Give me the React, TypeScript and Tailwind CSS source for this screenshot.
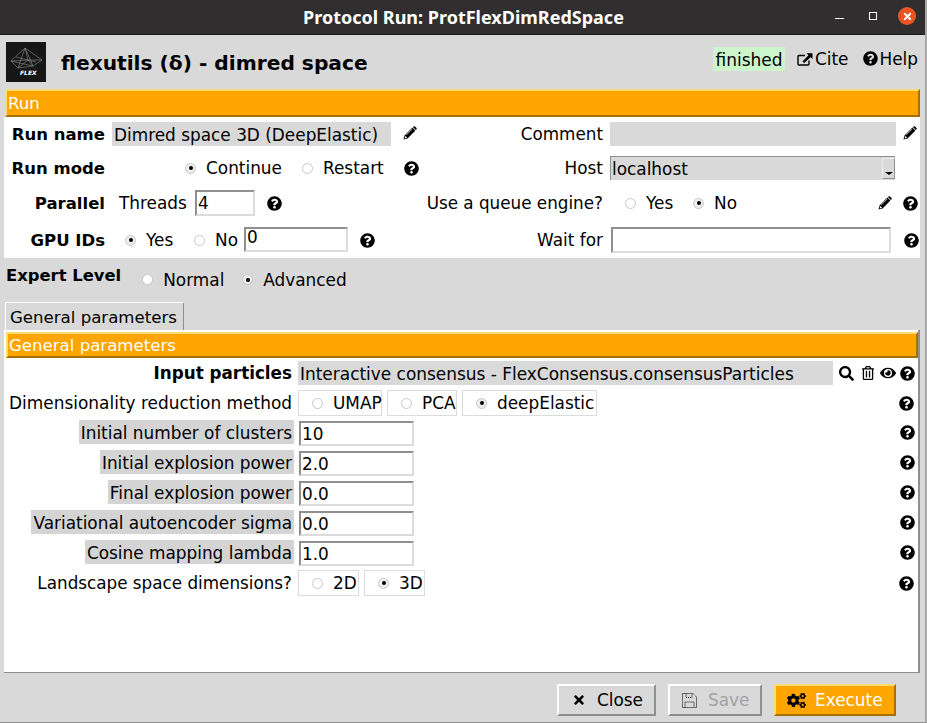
import React from 'react';
import {
  FaCogs,
  FaEye,
  FaQuestionCircle,
  FaRegTrashAlt,
  FaSearch,
  FaTimes,
} from 'react-icons/fa';

// ============================================
// Small widgets
// ============================================

const Help: React.FC<{ className?: string }> = ({ className = '' }) => (
  <FaQuestionCircle className={`text-[15px] text-black shrink-0 ${className}`} />
);

const Pencil: React.FC<{ className?: string }> = ({ className = '' }) => (
  <svg width="14" height="14" viewBox="0 0 14 14" className={`shrink-0 ${className}`}>
    <path d="M.5 13.5 1.6 9.4 9.4 1.6 12.4 4.6 4.6 12.4Z" fill="#000" />
    <path d="M10.2.8C10.9.1 11.6.1 12.2.7L13.3 1.8C13.9 2.4 13.9 3.1 13.2 3.8L12.9 4.1 9.9 1.1Z" fill="#000" />
    <path d="M2.3 9.9 1.6 12.4 4.1 11.7Z" fill="#fff" />
    <path d="M3.4 8.8 9.3 2.9" stroke="#fff" strokeWidth="0.7" />
  </svg>
);

const Radio: React.FC<{ checked?: boolean; label: string; className?: string }> = ({
  checked,
  label,
  className = '',
}) => (
  <span className={`flex items-center shrink-0 whitespace-nowrap ${className}`}>
    <span
      className={`w-[11px] h-[11px] rounded-full border border-[#c8c8c8] flex items-center justify-center shrink-0 ${
        checked ? 'bg-[#eeeeee]' : 'bg-white'
      }`}
    >
      {checked && <span className="w-[4px] h-[4px] rounded-full bg-black" />}
    </span>
    <span className="ml-[10px] pt-[2px]">{label}</span>
  </span>
);

const TextBox: React.FC<{ value?: string; className?: string; valueClass?: string }> = ({
  value = '',
  className = '',
  valueClass = 'pt-[2px]',
}) => (
  <div
    className={`bg-white border-2 border-t-[#8f8f8f] border-l-[#8f8f8f] border-r-[#dcdcdc] border-b-[#dcdcdc] pl-[1px] flex items-center shrink-0 ${className}`}
  >
    <span className={valueClass}>{value}</span>
  </div>
);

const SectionBar: React.FC<{ title: string; className?: string }> = ({ title, className = '' }) => (
  <div
    className={`bg-[#ffa500] text-white text-[16.6px] border-2 border-t-[#ffdb73] border-l-[#ffdb73] border-r-[#a67000] border-b-[#a67000] flex items-center ${className}`}
  >
    <span className="pt-[2px]">{title}</span>
  </div>
);

const CiteIcon = () => (
  <svg width="16" height="14" viewBox="0 0 16 14" className="shrink-0">
    <path d="M12 8.5V12a1 1 0 0 1-1 1H2a1 1 0 0 1-1-1V4.5a1 1 0 0 1 1-1h6" fill="none" stroke="#000" strokeWidth="1.4" />
    <path d="M5.5 9.5 11.5 3.2 9.5 1.2H15.5V7L13.5 5.2 7.2 11Z" fill="#000" />
  </svg>
);

const SaveIcon = () => (
  <svg width="15" height="15" viewBox="0 0 15 15" className="shrink-0">
    <path
      d="M.5.5H11L14.5 4V14.5H.5ZM4 .5V4.5H10V.5M3 14.5V9H12V14.5"
      fill="none"
      stroke="#000"
      strokeWidth="1"
      strokeDasharray="1 1"
    />
  </svg>
);

const FlexLogo = () => (
  <div className="w-10 h-10 bg-[#161616] shrink-0 relative overflow-hidden">
    <svg width="40" height="40" viewBox="0 0 40 40" className="absolute inset-0">
      <g fill="none" stroke="#8a8a8a" strokeWidth="0.6">
        <path d="M19 6 5 19 12 26 27 24 36 18Z" />
        <path d="M19 6 12 26M19 6 27 24M19 6 22 18M5 19 22 18 36 18M5 19 27 24M12 26 22 18 27 24M10 15 30 20" />
      </g>
    </svg>
    <span className="absolute left-[14px] top-[28px] text-[6px] leading-[6px] font-bold italic text-white">FLEX</span>
  </div>
);

// ============================================
// Form rows
// ============================================

const ParamRow: React.FC<{ label: string; value: string }> = ({ label, value }) => (
  <div className="flex items-start h-[30px]">
    <div className="w-[292px] flex justify-end shrink-0">
      <span className="bg-[#d4d4d4] h-6 leading-[26px] pl-[2px] pr-[2px] whitespace-nowrap">{label}</span>
    </div>
    <TextBox value={value} className="w-[115px] h-[25px] ml-[5px] mt-[1px]" />
    <Help className="ml-[486px] mt-[5px]" />
  </div>
);

const RadioBox: React.FC<{ checked?: boolean; label: string; className?: string }> = ({
  checked,
  label,
  className = '',
}) => (
  <div className={`h-[26px] border border-[#dcdcdc] flex items-center pl-[13px] shrink-0 ${className}`}>
    <Radio checked={checked} label={label} />
  </div>
);

// ============================================
// App
// ============================================

export default function App() {
  return (
    <div
      className="w-[927px] h-[723px] bg-[#d9d9d9] text-[#000] text-[16.9px] overflow-hidden flex flex-col border-r-2 border-b border-r-[#a8a8a8] border-b-[#8f8f8f]"
      style={{ fontFamily: '"DejaVu Sans", sans-serif' }}
    >
      {/* Title bar */}
      <div className="h-[35px] shrink-0 bg-[#302e2e] border-b border-[#1f1e1e] flex items-center relative">
        <div
          className="w-full text-center text-white font-bold text-[18px] pl-[2px]"
          style={{ fontFamily: '"Noto Sans", sans-serif' }}
        >
          Protocol Run: ProtFlexDimRedSpace
        </div>
        <span className="absolute left-[835px] top-[18px] w-[9px] h-[1px] bg-white" />
        <span className="absolute left-[869px] top-[12px] w-[8px] h-[8px] border border-white" />
        <span className="absolute left-[898px] top-[7px] w-[18px] h-[18px] rounded-full bg-[#e95420] flex items-center justify-center">
          <FaTimes className="text-white text-[11px]" />
        </span>
      </div>

      {/* Header */}
      <div className="h-[54px] shrink-0 flex items-center pl-[6px]">
        <FlexLogo />
        <div className="ml-[15px] pt-[2px] font-bold text-[20.2px] leading-none whitespace-nowrap">flexutils (δ) - dimred space</div>
        <div className="ml-auto flex items-center mb-[6px] mr-[7px]">
          <span className="bg-[#ccf5cc] h-6 leading-[26px] w-[72px] text-center text-[17px]">finished</span>
          <span className="ml-3 flex items-center">
            <CiteIcon />
            <span className="ml-[2px] pt-[2px]">Cite</span>
          </span>
          <span className="ml-[15px] flex items-center">
            <Help className="mr-[1px]" />
            <span className="pt-[2px]">Help</span>
          </span>
        </div>
      </div>

      {/* Run section */}
      <div className="ml-[5px] mr-[5px] shrink-0">
        <SectionBar title="Run" className="h-[28px] pl-[1px]" />
      </div>
      <div className="ml-[4px] mr-[5px] bg-white h-[141px] pt-[5px] shrink-0">
        <div className="flex items-center h-6">
          <div className="w-[101px] pt-[2px] text-right font-bold text-[16.5px] shrink-0 whitespace-nowrap">Run name</div>
          <div className="ml-[7px] w-[279px] h-6 leading-[26px] pl-[2px] bg-[#d9d9d9] shrink-0 whitespace-nowrap">Dimred space 3D (DeepElastic)</div>
          <Pencil className="ml-[12px] -mt-[2px]" />
          <div className="ml-[87px] w-[99px] pt-[2px] text-right text-[16.8px] shrink-0">Comment</div>
          <div className="ml-[7px] w-[286px] h-6 bg-[#d9d9d9] shrink-0" />
          <Pencil className="ml-[7px] -mt-[2px]" />
        </div>
        <div className="flex items-center h-6 mt-[10px]">
          <div className="w-[101px] pt-[2px] text-right font-bold text-[16.5px] shrink-0 whitespace-nowrap">Run mode</div>
          <Radio checked label="Continue" className="ml-[80px] w-[98px]" />
          <Radio label="Restart" className="ml-[19px] w-[83px]" />
          <Help className="ml-[19px]" />
          <div className="ml-[134px] w-[50px] pt-[2px] text-right shrink-0">Host</div>
          <div className="ml-[7px] w-[285px] h-[24px] bg-[#d9d9d9] border-t border-l border-t-[#8f8f8f] border-l-[#8f8f8f] leading-[24px] pl-[1px] relative shrink-0">
            localhost
            <span className="absolute right-[0px] top-[1px] w-[13px] h-[21px] bg-[#d9d9d9] border border-[#8f8f8f] border-t-[#eeeeee] border-l-[#eeeeee]">
              <span className="absolute left-[2px] bottom-[3px] w-0 h-0 border-l-[4px] border-r-[4px] border-t-[3px] border-l-transparent border-r-transparent border-t-black" />
            </span>
          </div>
        </div>
        <div className="flex items-center h-[26px] mt-[10px]">
          <div className="w-[101px] pt-[2px] text-right font-bold text-[16.5px] shrink-0">Parallel</div>
          <span className="ml-[14px] w-[68px] pt-[2px] shrink-0 whitespace-nowrap">Threads</span>
          <TextBox value="4" className="ml-[8px] w-[60px] h-[26px]" />
          <Help className="ml-[12px]" />
          <div className="ml-[145px] w-[176px] pt-[2px] text-[16.8px] whitespace-nowrap shrink-0 flex justify-end">Use a queue engine?</div>
          <Radio label="Yes" className="ml-[22px] w-[49px]" />
          <Radio checked label="No" className="ml-[19px] w-[42px]" />
          <Pencil className="ml-[143px]" />
          <Help className="ml-[11px]" />
        </div>
        <div className="flex items-center h-[26px] mt-[11px]">
          <div className="w-[101px] pt-[2px] text-right font-bold text-[16.5px] shrink-0 whitespace-nowrap">GPU IDs</div>
          <Radio checked label="Yes" className="ml-[20px] w-[48px]" />
          <Radio label="No" className="ml-[21px] w-[42px]" />
          <TextBox value="0" valueClass="mb-[4px]" className="ml-[8px] w-[104px] h-[25px] -mt-[1px]" />
          <Help className="ml-[12px]" />
          <div className="ml-[158px] w-[70px] pt-[2px] shrink-0 whitespace-nowrap flex justify-end">Wait for</div>
          <TextBox className="ml-[8px] w-[280px] h-[26px]" />
          <Help className="ml-[13px]" />
        </div>
      </div>

      {/* Expert level */}
      <div className="h-[44px] shrink-0 flex items-start pl-[6px]">
        <span className="font-bold text-[16.4px] mt-[6px] whitespace-nowrap">Expert Level</span>
        <Radio label="Normal" className="ml-[21px] mt-[8px] w-[80px]" />
        <Radio checked label="Advanced" className="ml-[20px] mt-[8px] w-[102px]" />
      </div>

      {/* Tab */}
      <div className="ml-[5px] w-[179px] h-[28px] shrink-0 bg-[#d9d9d9] border border-b-0 border-white border-r-[#8f8f8f] rounded-tr-[3px] pl-[4px] text-[16.6px] leading-[29px] whitespace-nowrap">
        General parameters
      </div>

      {/* Tab panel */}
      <div className="ml-[4px] mr-[5px] h-[343px] shrink-0 bg-white border-b border-r-2 border-[#8f8f8f] pt-[2px] pl-[2px] pr-[0px]">
        <SectionBar title="General parameters" className="h-[26px] pl-[1px]" />
        <div className="pt-[3px]">
          <div className="flex items-center h-6">
            <div className="w-[286px] pt-[2px] font-bold text-[16.8px] shrink-0 whitespace-nowrap flex justify-end">Input particles</div>
            <div className="ml-[6px] w-[535px] h-6 leading-[26px] pl-[2px] bg-[#d9d9d9] text-[16.95px] shrink-0 whitespace-nowrap">
              Interactive consensus - FlexConsensus.consensusParticles
            </div>
            <FaSearch className="ml-[6px] text-[15px] shrink-0" />
            <FaRegTrashAlt className="ml-[7px] text-[14px] shrink-0" />
            <FaEye className="ml-[5px] text-[16px] shrink-0" />
            <Help className="ml-[4px]" />
          </div>
          <div className="flex items-center h-[26px] mt-[5px]">
            <div className="w-[286px] pt-[2px] text-[16.95px] shrink-0 whitespace-nowrap flex justify-end">Dimensionality reduction method</div>
            <RadioBox label="UMAP" className="ml-[6px] w-[84px]" />
            <RadioBox label="PCA" className="ml-[5px] w-[70px]" />
            <RadioBox checked label="deepElastic" className="ml-[5px] w-[135px]" />
            <Help className="ml-[302px]" />
          </div>
          <div className="mt-[4px] -ml-[4px]">
            <ParamRow label="Initial number of clusters" value="10" />
            <ParamRow label="Initial explosion power" value="2.0" />
            <ParamRow label="Final explosion power" value="0.0" />
            <ParamRow label="Variational autoencoder sigma" value="0.0" />
            <ParamRow label="Cosine mapping lambda" value="1.0" />
          </div>
          <div className="flex items-center h-[26px]">
            <div className="w-[286px] pt-[2px] text-[16.8px] shrink-0 whitespace-nowrap flex justify-end">Landscape space dimensions?</div>
            <RadioBox label="2D" className="ml-[6px] w-[61px]" />
            <RadioBox checked label="3D" className="ml-[5px] w-[61px]" />
            <Help className="ml-[474px]" />
          </div>
        </div>
      </div>

      {/* Footer buttons */}
      <div className="flex items-start pt-[11px] pl-[557px]">
        <button className="w-[99px] h-[32px] bg-[#d9d9d9] border-2 border-t-white border-l-white border-r-[#8f8f8f] border-b-[#8f8f8f] flex items-center pl-[13px]">
          <FaTimes className="text-[14px]" />
          <span className="ml-[11px] pt-[2px]">Close</span>
        </button>
        <button className="ml-3 w-[94px] h-[32px] bg-[#d9d9d9] border-2 border-t-white border-l-white border-r-[#8f8f8f] border-b-[#8f8f8f] flex items-center pl-[12px] text-[#a3a3a3]">
          <SaveIcon />
          <span className="ml-[11px] pt-[2px]">Save</span>
        </button>
        <button className="ml-3 w-[122px] h-[32px] bg-[#ffa500] text-white border-2 border-t-[#ffdb73] border-l-[#ffdb73] border-r-[#a67000] border-b-[#a67000] flex items-center pl-[11px]">
          <FaCogs className="text-[19px] text-black shrink-0" />
          <span className="ml-[9px] pt-[2px]">Execute</span>
        </button>
      </div>
    </div>
  );
}
